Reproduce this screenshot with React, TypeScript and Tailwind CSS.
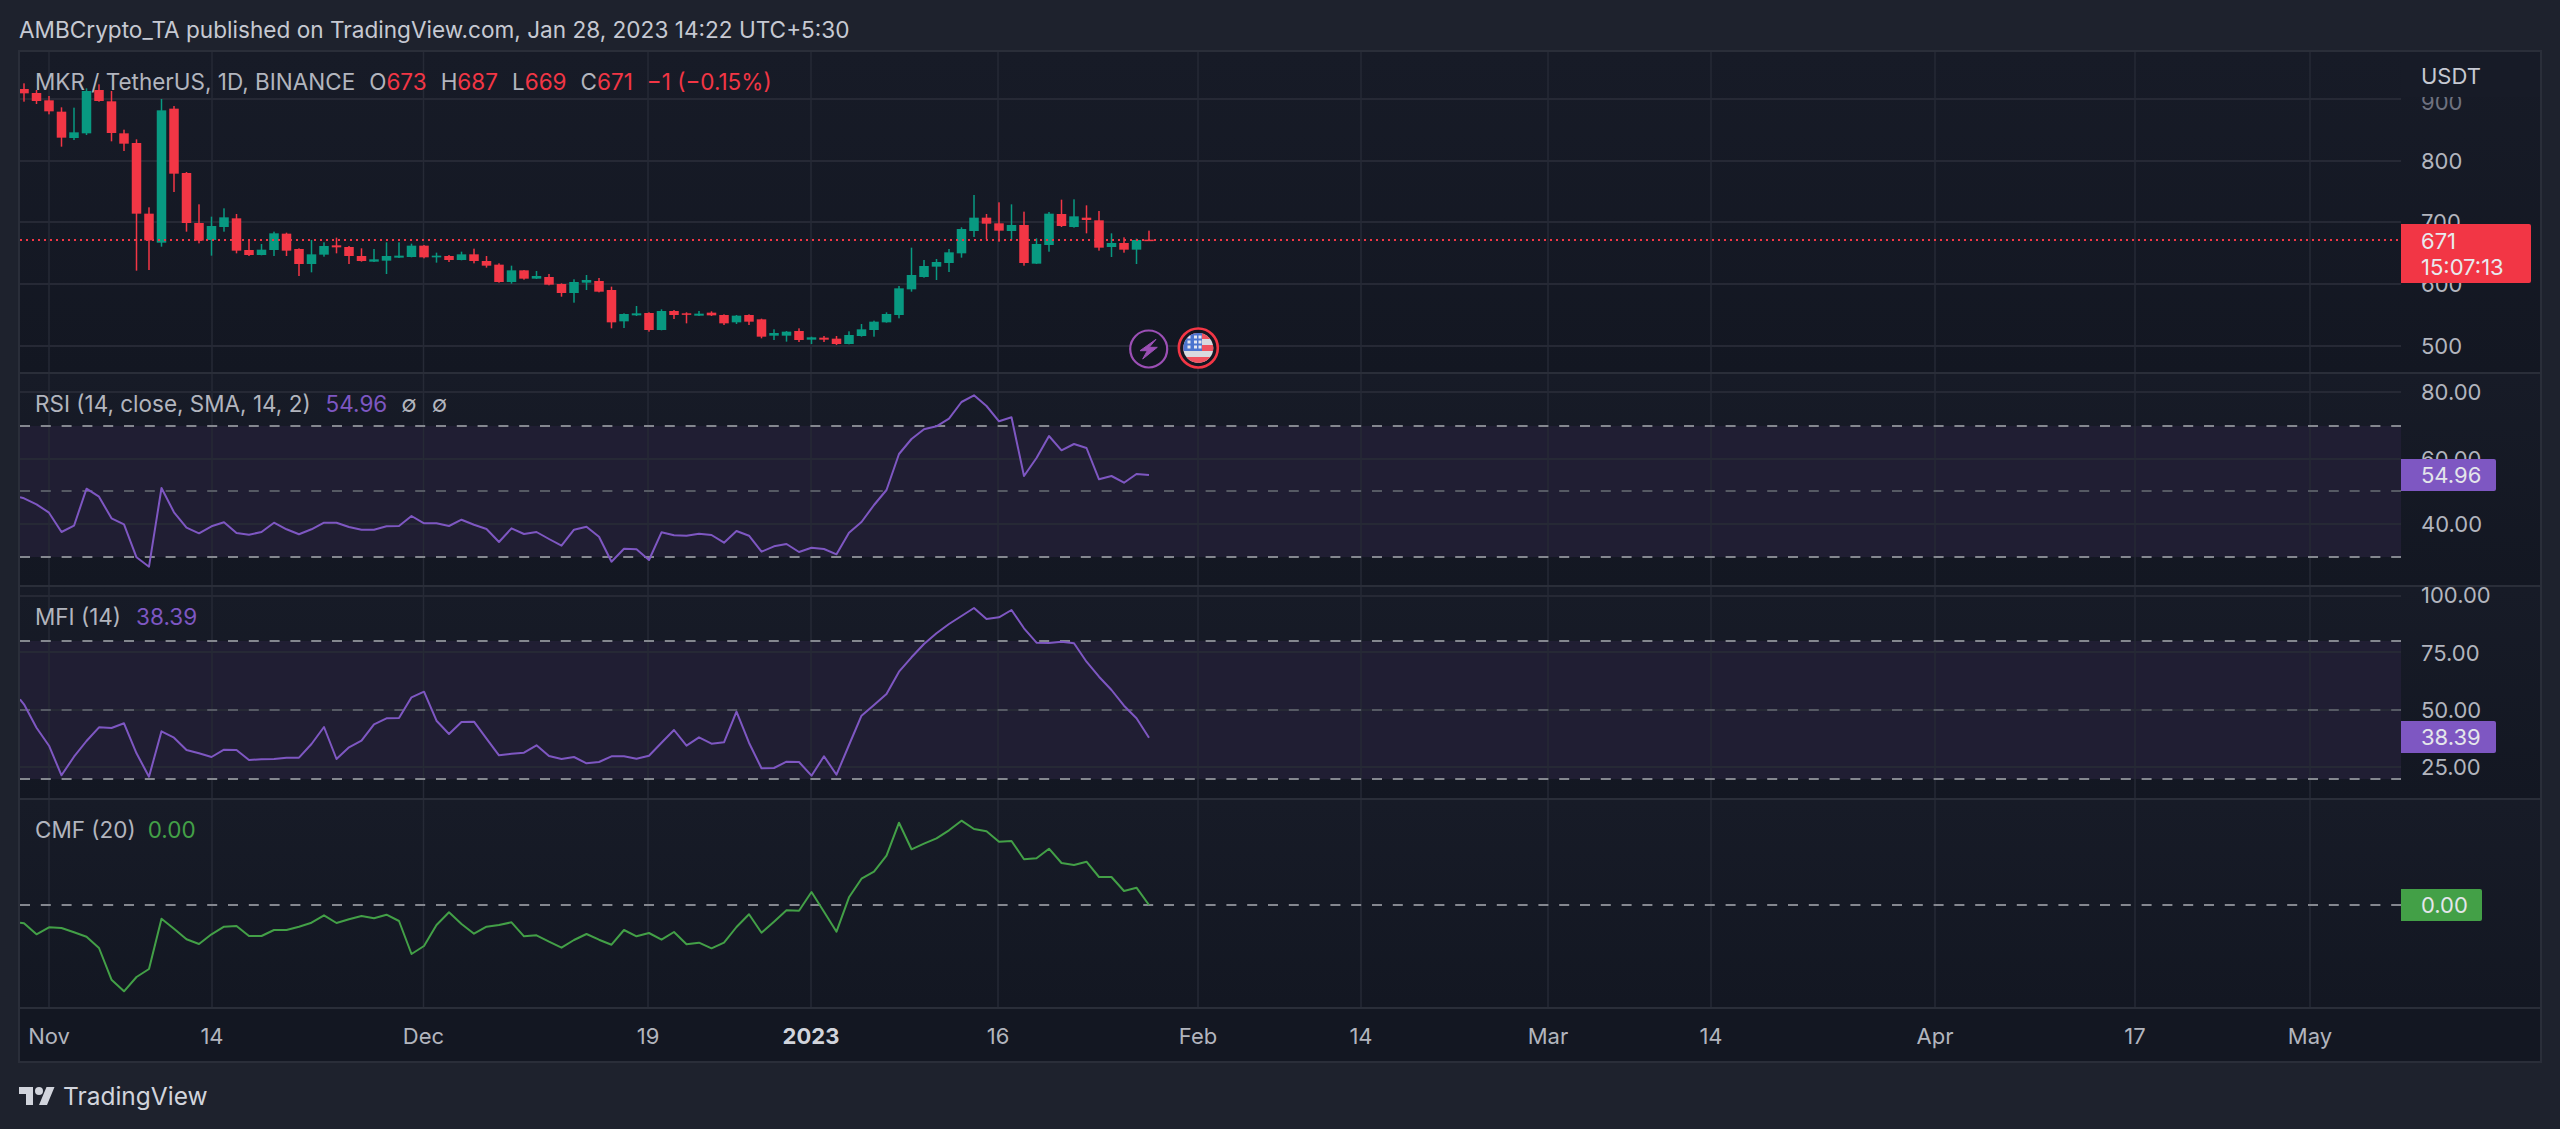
import { useId } from "react";

// day 0 = Nov 1, 12.5px per day, everything in page pixels
const dayX = (d: number) => 49 + 12.5 * d;
const CHART_LEFT = 20;
const CHART_RIGHT = 2401;

const RED = "#f23645";
const TEAL = "#089981";
const PURPLE = "#7e57c2";
const GREEN = "#43a047";

const GRID_X = [49, 212, 423.5, 648, 811, 998, 1198, 1361, 1548, 1711, 1935, 2135, 2310];

// [high, bodyTop, bodyBottom, low, up] in 3x page pixels, starting Oct 30
const CANDLES: [number, number, number, number, number][] = [
  [250, 267, 280, 305, 0], [270, 279, 303, 312, 0], [288, 301, 334, 343, 0], [322, 335, 413, 440, 0],
  [323, 397, 414, 420, 1], [265, 273, 400, 405, 1], [253, 270, 303, 305, 0], [273, 304, 399, 424, 0],
  [389, 400, 431, 453, 0], [418, 429, 641, 812, 0], [622, 641, 721, 810, 0], [297, 331, 728, 740, 1],
  [318, 326, 521, 576, 0], [516, 519, 669, 695, 0], [613, 669, 722, 730, 0], [650, 678, 720, 767, 1],
  [625, 652, 681, 695, 1], [642, 655, 752, 760, 0], [720, 750, 765, 768, 0], [732, 749, 765, 766, 1],
  [695, 700, 750, 768, 1], [698, 701, 752, 768, 0], [745, 747, 792, 828, 0], [720, 763, 792, 817, 1],
  [727, 738, 764, 770, 1], [713, 736, 742, 760, 0], [738, 741, 768, 792, 0], [745, 768, 783, 785, 0],
  [747, 778, 785, 786, 1], [727, 768, 782, 822, 1], [727, 767, 773, 774, 1], [731, 737, 771, 772, 1],
  [735, 737, 772, 775, 0], [758, 767, 772, 788, 1], [765, 768, 780, 786, 0], [755, 763, 780, 781, 1],
  [746, 763, 783, 790, 0], [768, 783, 797, 803, 0], [790, 794, 846, 848, 0], [797, 811, 846, 851, 1],
  [810, 811, 836, 839, 0], [813, 828, 836, 837, 1], [822, 831, 854, 856, 0], [850, 852, 879, 890, 0],
  [838, 846, 879, 908, 1], [825, 840, 848, 870, 1], [834, 843, 875, 877, 0], [860, 870, 967, 985, 0],
  [940, 942, 964, 984, 1], [918, 940, 946, 948, 1], [937, 939, 990, 995, 0], [928, 933, 990, 991, 1],
  [930, 933, 945, 957, 0], [937, 940, 944, 970, 0], [933, 941, 947, 948, 1], [934, 938, 946, 948, 0],
  [943, 945, 970, 975, 0], [945, 947, 967, 972, 1], [943, 945, 965, 975, 0], [956, 958, 1010, 1015, 0],
  [988, 999, 1007, 1020, 1], [993, 995, 1007, 1025, 1], [985, 993, 1020, 1026, 0], [1010, 1012, 1019, 1032, 1],
  [1008, 1013, 1019, 1026, 0], [1008, 1016, 1032, 1035, 0], [994, 1005, 1032, 1033, 1], [972, 988, 1008, 1010, 1],
  [962, 965, 990, 1010, 1], [937, 942, 967, 968, 1], [858, 865, 945, 955, 1], [743, 825, 868, 875, 1],
  [780, 798, 831, 833, 1], [777, 786, 800, 840, 1], [747, 757, 789, 816, 1], [682, 687, 760, 773, 1],
  [585, 653, 693, 711, 1], [642, 653, 671, 718, 0], [607, 670, 692, 725, 0], [613, 675, 693, 720, 1],
  [635, 675, 789, 797, 0], [715, 732, 791, 792, 1], [636, 641, 735, 755, 1], [599, 642, 678, 681, 0],
  [598, 649, 681, 683, 1], [616, 653, 660, 700, 0], [633, 661, 743, 752, 0], [700, 729, 741, 771, 1],
  [712, 729, 749, 758, 0], [716, 720, 749, 792, 1], [692, 719, 722, 722, 0],
];

const RSI = [
  382, 385, 403, 428, 486, 467, 356, 380, 445, 463, 562, 590, 354, 427, 473, 490, 469, 457, 489, 494, 486, 458, 478,
  493, 478, 458, 458, 471, 479, 479, 469, 468, 438, 460, 460, 468, 449, 464, 477, 516, 475, 492, 486, 507, 527, 479,
  470, 500, 575, 536, 538, 570, 487, 496, 497, 491, 495, 518, 483, 497, 545, 529, 522, 546, 533, 537, 553, 488, 456,
  405, 360, 252, 207, 178, 169, 146, 96, 76, 108, 154, 142, 318, 264, 198, 241, 222, 234, 328, 318, 338, 312, 315,
];
const MFI = [
  988, 1003, 1073, 1127, 1216, 1160, 1113, 1072, 1074, 1060, 1150, 1220, 1084, 1103, 1140, 1150, 1161, 1139, 1140,
  1170, 1168, 1167, 1163, 1163, 1122, 1071, 1167, 1132, 1112, 1063, 1045, 1044, 982, 965, 1052, 1092, 1056, 1055,
  1106, 1156, 1151, 1148, 1126, 1158, 1167, 1161, 1180, 1176, 1159, 1159, 1166, 1157, 1118, 1080, 1127, 1102, 1121,
  1117, 1025, 1118, 1195, 1194, 1175, 1176, 1217, 1159, 1214, 1125, 1037, 1005, 972, 905, 862, 822, 790, 762, 738,
  714, 747, 742, 720, 775, 818, 819, 815, 820, 875, 920, 960, 1007, 1045, 1103,
];
const CMF = [
  398, 400, 433, 412, 414, 427, 440, 474, 569, 604, 561, 537, 386, 416, 448, 462, 433, 410, 408, 438, 438, 420, 420,
  410, 398, 376, 399, 388, 378, 385, 374, 393, 492, 468, 405, 367, 402, 431, 410, 405, 397, 439, 436, 455, 473, 450,
  432, 449, 464, 420, 439, 429, 449, 426, 463, 458, 475, 458, 411, 373, 428, 395, 361, 362, 306, 365, 425, 322, 266,
  245, 197, 98, 178, 161, 145, 121, 92, 117, 124, 155, 153, 208, 205, 176, 219, 225, 215, 261, 261, 303, 293, 345,
];

function seriesPoints(values: number[], top: number) {
  // first value sits on the pane's left edge, second is Oct 30
  return values
    .map((v, i) => `${i === 0 ? CHART_LEFT : dayX(i - 3)},${(top + v / 3).toFixed(1)}`)
    .join(" ");
}

function VGrid({ top, bottom }: { top: number; bottom: number }) {
  return (
    <>
      {GRID_X.map((x) => (
        <line key={x} x1={x} x2={x} y1={top} y2={bottom} stroke="#262a36" strokeWidth={1.5} />
      ))}
    </>
  );
}

function HGrid({ ys }: { ys: number[] }) {
  return (
    <>
      {ys.map((y) => (
        <line key={y} x1={CHART_LEFT} x2={CHART_RIGHT} y1={y} y2={y} stroke="#262935" strokeWidth={2} />
      ))}
    </>
  );
}

function Dashed({ y, color = "#84878f" }: { y: number; color?: string }) {
  return <line x1={CHART_LEFT} x2={CHART_RIGHT} y1={y} y2={y} stroke={color} strokeWidth={2} strokeDasharray="10 10.8" />;
}

function Legend({ children }: { children: React.ReactNode }) {
  return (
    <div className="absolute left-[15px] top-[17px] flex h-[26px] items-center whitespace-pre text-[22.5px] leading-none text-[#b2b5be]">
      {children}
    </div>
  );
}

function Tick({ y, paneTop, label, className = "text-[#b2b5be]" }: { y: number; paneTop: number; label: string; className?: string }) {
  return (
    <div
      className={`absolute left-[20px] flex h-[26px] items-center text-[22px] leading-none ${className}`}
      style={{ top: y - paneTop - 13 }}
    >
      {label}
    </div>
  );
}

function ValueTag({ y, paneTop, width, bg, label }: { y: number; paneTop: number; width: number; bg: string; label: string }) {
  return (
    <div
      className="absolute left-0 flex h-[32px] items-center rounded-r-[2px] pl-[20px] text-[22px] leading-none text-[#e4e6eb]"
      style={{ top: y - paneTop, width, backgroundColor: bg }}
    >
      {label}
    </div>
  );
}

function Pane({
  top,
  height,
  legend,
  axis,
  children,
}: {
  top: number;
  height: number;
  legend: React.ReactNode;
  axis: React.ReactNode;
  children: React.ReactNode;
}) {
  return (
    <div className="relative flex border-b-2 border-[#2a2e39] bg-linear-to-b from-[#171b27] to-[#131722]" style={{ height }}>
      <svg
        width={CHART_RIGHT - CHART_LEFT}
        height={height - 2}
        viewBox={`${CHART_LEFT} ${top} ${CHART_RIGHT - CHART_LEFT} ${height - 2}`}
        className="block shrink-0"
      >
        {children}
      </svg>
      <div className="relative w-[139px]">{axis}</div>
      <Legend>{legend}</Legend>
    </div>
  );
}

function Flag() {
  const clip = useId();
  return (
    <g>
      <circle cx={1198.3} cy={348} r={19.5} fill="#131722" stroke={RED} strokeWidth={2.6} />
      <clipPath id={clip}>
        <circle cx={1198.3} cy={348} r={15} />
      </clipPath>
      <g clipPath={`url(#${clip})`}>
        <rect x={1183} y={333} width={31} height={31} fill="#d9dadf" />
        <rect x={1183} y={333} width={31} height={6} fill="#f0525f" />
        <rect x={1183} y={345} width={31} height={6} fill="#f0525f" />
        <rect x={1183} y={357} width={31} height={7} fill="#f0525f" />
        <rect x={1183} y={333} width={19} height={18} fill="#4b74cf" />
        {[1189, 1195.5, 1200].map((x) =>
          [337, 342, 347].map((y) => <rect key={`${x}-${y}`} x={x - 1.5} y={y - 1.5} width={3} height={3} fill="#e4e6f0" />),
        )}
      </g>
    </g>
  );
}

function MainPaneDrawing() {
  return (
    <>
      <HGrid ys={[99, 161, 222, 284, 346]} />
      <VGrid top={52} bottom={372} />
      {CANDLES.map(([high, top, bottom, low, up], i) => {
        const x = dayX(i - 2);
        const color = up ? TEAL : RED;
        return (
          <g key={i} fill={color}>
            <rect x={x - 0.75} y={high / 3} width={1.5} height={(low - high) / 3} />
            <rect x={x - 4.75} y={top / 3} width={9.5} height={Math.max((bottom - top) / 3, 1.5)} />
          </g>
        );
      })}
      <line x1={CHART_LEFT} x2={CHART_RIGHT} y1={240} y2={240} stroke={RED} strokeWidth={2} strokeDasharray="2 4" />
      <circle cx={1148.7} cy={349} r={18.5} fill="#131722" stroke="#9b4fb5" strokeWidth={2.2} />
      <polygon
        points="1156,339.3 1140,350.7 1147.3,350.7 1142.7,359 1157.3,347.3 1149.3,347.3"
        fill="#9b4fb5"
        stroke="#9b4fb5"
        strokeWidth={1}
      />
      <Flag />
    </>
  );
}

function Band({ top, bottom }: { top: number; bottom: number }) {
  return <rect x={CHART_LEFT} y={top} width={CHART_RIGHT - CHART_LEFT} height={bottom - top} fill="#201e33" />;
}

const TIME_LABELS: [number, string, boolean?][] = [
  [49, "Nov"], [212, "14"], [423.5, "Dec"], [648, "19"], [811, "2023", true], [998, "16"], [1198, "Feb"],
  [1361, "14"], [1548, "Mar"], [1711, "14"], [1935, "Apr"], [2135, "17"], [2310, "May"],
];

export default function App() {
  return (
    <div className="h-[1129px] w-[2560px] overflow-hidden bg-[#1e222d] font-['Inter','Liberation_Sans',sans-serif]">
      <header className="flex h-[50px] items-center pl-[19px] pt-[10px] text-[22.6px] leading-none text-[#c6c9d2]">
        AMBCrypto_TA published on TradingView.com, Jan 28, 2023 14:22 UTC+5:30
      </header>

      <div className="ml-[18px] w-[2524px] border-2 border-[#2a2e39]">
        <Pane
          top={52}
          height={322}
          legend={
            <>
              <span>MKR / TetherUS, 1D, BINANCE</span>
              <span className="ml-[14px]">
                O<span className="text-[#f23645]">673</span>
              </span>
              <span className="ml-[14px]">
                H<span className="text-[#f23645]">687</span>
              </span>
              <span className="ml-[14px]">
                L<span className="text-[#f23645]">669</span>
              </span>
              <span className="ml-[14px]">
                C<span className="text-[#f23645]">671</span>
              </span>
              <span className="ml-[14px] text-[#f23645]">−1 (−0.15%)</span>
            </>
          }
          axis={
            <>
              <Tick y={102} paneTop={52} label="900" className="text-[#6f7280]" />
              <div className="absolute inset-x-0 top-0 h-[45px] bg-[#171b27]" />
              <Tick y={76} paneTop={52} label="USDT" className="text-[#c6c9d2]" />
              <Tick y={161} paneTop={52} label="800" />
              <Tick y={222} paneTop={52} label="700" />
              <Tick y={284} paneTop={52} label="600" />
              <Tick y={346} paneTop={52} label="500" />
              <div className="absolute left-0 top-[172px] flex h-[59px] w-[130px] flex-col rounded-r-[2px] bg-[#f23645] pl-[20px] text-[22px] leading-none text-[#e8eaee]">
                <span className="mt-[4px] flex h-[26px] items-center">671</span>
                <span className="flex h-[26px] items-center">15:07:13</span>
              </div>
            </>
          }
        >
          <MainPaneDrawing />
        </Pane>

        <Pane
          top={374}
          height={213}
          legend={
            <>
              <span>RSI (14, close, SMA, 14, 2)</span>
              <span className="ml-[15px] text-[#7e57c2]">54.96</span>
              <span className="ml-[14px]">∅</span>
              <span className="ml-[15px]">∅</span>
            </>
          }
          axis={
            <>
              <Tick y={392} paneTop={374} label="80.00" />
              <Tick y={459} paneTop={374} label="60.00" />
              <Tick y={524} paneTop={374} label="40.00" />
              <ValueTag y={459} paneTop={374} width={95} bg={PURPLE} label="54.96" />
            </>
          }
        >
          <Band top={426} bottom={557} />
          <HGrid ys={[392, 459, 524]} />
          <VGrid top={374} bottom={585} />
          <Dashed y={426} />
          <Dashed y={491} color="#565a64" />
          <Dashed y={557} />
          <polyline points={seriesPoints(RSI, 370)} fill="none" stroke={PURPLE} strokeWidth={2} strokeLinejoin="round" />
        </Pane>

        <Pane
          top={587}
          height={213}
          legend={
            <>
              <span>MFI (14)</span>
              <span className="ml-[15px] text-[#7e57c2]">38.39</span>
            </>
          }
          axis={
            <>
              <Tick y={595} paneTop={587} label="100.00" />
              <Tick y={653} paneTop={587} label="75.00" />
              <Tick y={710} paneTop={587} label="50.00" />
              <Tick y={767} paneTop={587} label="25.00" />
              <ValueTag y={721} paneTop={587} width={95} bg={PURPLE} label="38.39" />
            </>
          }
        >
          <Band top={641} bottom={779} />
          <HGrid ys={[596, 652, 710, 767]} />
          <VGrid top={587} bottom={798} />
          <Dashed y={641} />
          <Dashed y={710} color="#565a64" />
          <Dashed y={779} />
          <polyline points={seriesPoints(MFI, 370)} fill="none" stroke={PURPLE} strokeWidth={2} strokeLinejoin="round" />
        </Pane>

        <Pane
          top={800}
          height={209}
          legend={
            <>
              <span>CMF (20)</span>
              <span className="ml-[12px] text-[#43a047]">0.00</span>
            </>
          }
          axis={<ValueTag y={889} paneTop={800} width={81} bg={GREEN} label="0.00" />}
        >
          <VGrid top={800} bottom={1007} />
          <Dashed y={905} />
          <polyline points={seriesPoints(CMF, 790)} fill="none" stroke={GREEN} strokeWidth={2} strokeLinejoin="round" />
        </Pane>

        <div className="relative h-[52px] bg-[#131722] text-[22px] leading-none text-[#b2b5be]">
          {TIME_LABELS.map(([x, label, bold]) => (
            <span
              key={`${x}-${label}`}
              className={`absolute top-[16px] -translate-x-1/2 ${bold ? "font-bold text-[#d1d4dc]" : ""}`}
              style={{ left: x - CHART_LEFT }}
            >
              {label}
            </span>
          ))}
        </div>
      </div>

      <footer className="flex h-[66px] items-center pl-[19px]">
        <svg width={36} height={18} viewBox="0 4 36 18" className="shrink-0" fill="#d1d4dc">
          <path d="M14 22H7V11H0V4h14v18zM28 22h-8l7.5-18h8L28 22z" />
          <circle cx={20} cy={8} r={4} />
        </svg>
        <span className="ml-[8px] text-[24.5px] leading-none text-[#d1d4dc]">TradingView</span>
      </footer>
    </div>
  );
}
